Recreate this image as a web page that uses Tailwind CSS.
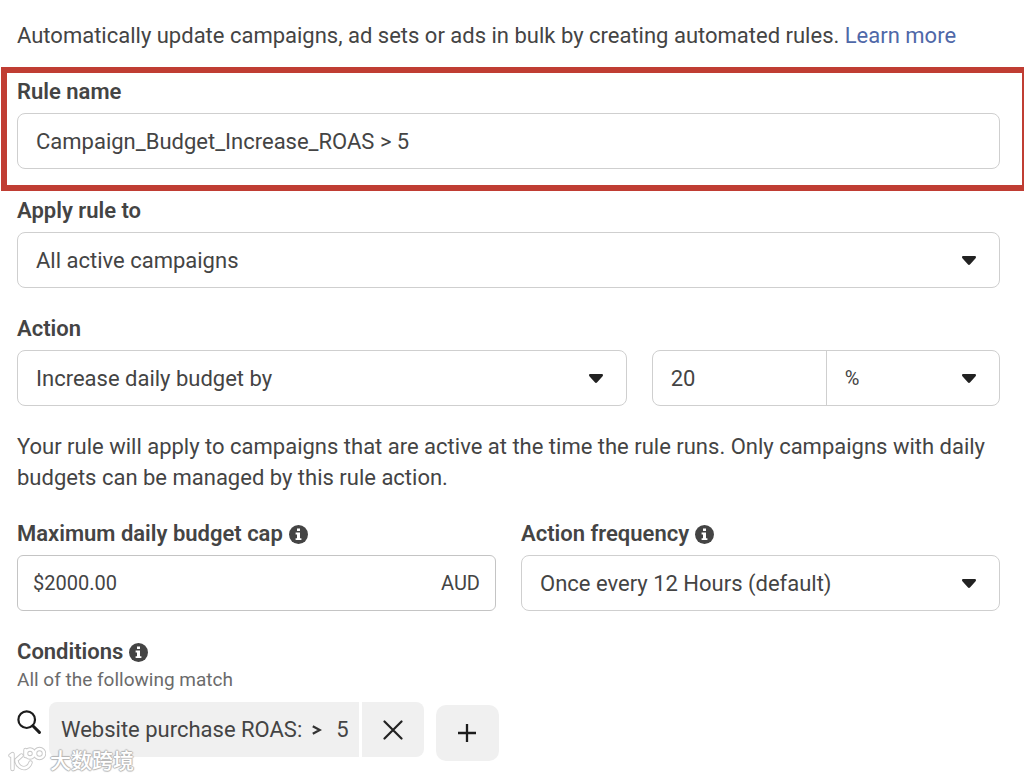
<!DOCTYPE html>
<html lang="en">
<head>
    <meta charset="UTF-8" />
    <meta name="viewport" content="width=device-width, initial-scale=1.0" />
    <title>Create Rule</title>
    <script src="https://cdn.jsdelivr.net/npm/@tailwindcss/browser@4"></script>
</head>

<body class="bg-white text-[#444444] font-[Roboto,sans-serif] text-[22px] overflow-x-hidden">

    <main class="pl-[17px] pr-6 pt-5">
        <p class="leading-[31px]">
            Automatically update campaigns, ad sets or ads in bulk by creating automated rules.
            <a href="#" class="text-[#4f68a8]">Learn more</a>
        </p>

        <form>
            <!-- Rule name, highlighted -->
            <div class="mt-4 -ml-4 -mr-7 border-6 border-[#c03d33] pt-1 pb-4 pl-[10px] pr-[22px]">
                <label for="ruleName" class="block leading-[30px] font-semibold">Rule name</label>
                <input type="text" id="ruleName" value="Campaign_Budget_Increase_ROAS &gt; 5"
                    class="mt-1.5 block h-14 w-full rounded-lg border border-[#cfcfcf] px-[18px]">
            </div>

            <div class="mt-[5px]">
                <label for="applyTo" class="block leading-[30px] font-semibold">Apply rule to</label>
                <div class="relative mt-1.5">
                    <select id="applyTo" class="block h-14 w-full appearance-none rounded-lg border border-[#cfcfcf] bg-white pl-[18px] pr-12">
                        <option>All active campaigns</option>
                    </select>
                    <svg class="pointer-events-none absolute right-6 top-6 h-[9px] w-[14px]" viewBox="0 0 14 9" fill="#222222"><path d="M1.3 0h11.4c1.2 0 1.7 1.3.9 2.2L8.2 8.3c-.7.8-1.7.8-2.4 0L.4 2.2C-.4 1.3.1 0 1.3 0z" /></svg>
                </div>
            </div>

            <div class="mt-[26px]">
                <label for="action" class="block leading-[30px] font-semibold">Action</label>
                <div class="mt-1.5 grid grid-cols-[7fr_4fr] gap-[25px]">
                    <div class="relative">
                        <select id="action" class="block h-14 w-full appearance-none rounded-lg border border-[#cfcfcf] bg-white pl-[18px] pr-12">
                            <option>Increase daily budget by</option>
                        </select>
                        <svg class="pointer-events-none absolute right-6 top-6 h-[9px] w-[14px]" viewBox="0 0 14 9" fill="#222222"><path d="M1.3 0h11.4c1.2 0 1.7 1.3.9 2.2L8.2 8.3c-.7.8-1.7.8-2.4 0L.4 2.2C-.4 1.3.1 0 1.3 0z" /></svg>
                    </div>
                    <div class="grid h-14 grid-cols-2 rounded-lg border border-[#cfcfcf]">
                        <input type="text" aria-label="Budget increase" value="20" class="w-full min-w-0 px-[18px]">
                        <div class="relative border-l border-[#cfcfcf]">
                            <select aria-label="Unit" class="h-full w-full appearance-none bg-transparent pl-[18px] pr-12 text-xl">
                                <option>%</option>
                            </select>
                            <svg class="pointer-events-none absolute right-[23px] top-[23px] h-[9px] w-[14px]" viewBox="0 0 14 9" fill="#222222"><path d="M1.3 0h11.4c1.2 0 1.7 1.3.9 2.2L8.2 8.3c-.7.8-1.7.8-2.4 0L.4 2.2C-.4 1.3.1 0 1.3 0z" /></svg>
                        </div>
                    </div>
                </div>
            </div>

            <p class="mt-[25px] leading-[31px]">
                Your rule will apply to campaigns that are active at the time the rule runs. Only campaigns with daily budgets can be managed by this rule action.
            </p>

            <div class="mt-[26px] grid grid-cols-2 gap-[25px]">
                <div>
                    <div class="flex items-center gap-1.5">
                        <label for="budgetCap" class="leading-[30px] font-semibold">Maximum daily budget cap</label>
                        <svg class="size-[19px]" viewBox="0 0 19 19"><circle cx="9.5" cy="9.5" r="9.5" fill="#444444" /><path d="M8 3.4h3v2.7H8zM6.6 7.5H11v5.7h1.4v1.9H6.6v-1.9H8V9.4H6.6z" fill="#fff" /></svg>
                    </div>
                    <div class="mt-1.5 flex h-14 items-center rounded-md border border-[#c4c4c4] px-[15px] text-xl">
                        <input type="text" id="budgetCap" value="$2000.00" class="min-w-0 flex-1">
                        <span>AUD</span>
                    </div>
                </div>
                <div>
                    <div class="flex items-center gap-1.5">
                        <label for="frequency" class="leading-[30px] font-semibold">Action frequency</label>
                        <svg class="size-[19px]" viewBox="0 0 19 19"><circle cx="9.5" cy="9.5" r="9.5" fill="#444444" /><path d="M8 3.4h3v2.7H8zM6.6 7.5H11v5.7h1.4v1.9H6.6v-1.9H8V9.4H6.6z" fill="#fff" /></svg>
                    </div>
                    <div class="relative mt-1.5">
                        <select id="frequency" class="block h-14 w-full appearance-none rounded-lg border border-[#cfcfcf] bg-white pl-[18px] pr-12">
                            <option>Once every 12 Hours (default)</option>
                        </select>
                        <svg class="pointer-events-none absolute right-6 top-6 h-[9px] w-[14px]" viewBox="0 0 14 9" fill="#222222"><path d="M1.3 0h11.4c1.2 0 1.7 1.3.9 2.2L8.2 8.3c-.7.8-1.7.8-2.4 0L.4 2.2C-.4 1.3.1 0 1.3 0z" /></svg>
                    </div>
                </div>
            </div>

            <div class="mt-[26px]">
                <div class="flex items-center gap-1.5">
                    <h2 class="leading-[30px] font-semibold">Conditions</h2>
                    <svg class="size-[19px]" viewBox="0 0 19 19"><circle cx="9.5" cy="9.5" r="9.5" fill="#444444" /><path d="M8 3.4h3v2.7H8zM6.6 7.5H11v5.7h1.4v1.9H6.6v-1.9H8V9.4H6.6z" fill="#fff" /></svg>
                </div>
                <p class="text-[19px] leading-[26px] text-[#6b6b6b]">All of the following match</p>

                <div class="mt-[9px] flex items-start">
                    <svg class="mt-2 mr-2 size-6" viewBox="0 0 24 24" fill="none" stroke="#1c1c1c"><circle cx="9.7" cy="9.7" r="8.3" stroke-width="2.2" /><path d="M15.8 15.8l6.600 6.600" stroke-width="3" stroke-linecap="round" /></svg>
                    <div class="flex gap-[3px]">
                        <button type="button" class="flex h-[55px] items-center rounded-l-lg bg-[#f0f0f0] pl-3 pr-2.5">
                            Website purchase ROAS:
                            <svg class="ml-2.5 mr-3.5 h-[10px] w-[10px]" viewBox="0 0 10 10" fill="none" stroke="#333333" stroke-width="2.3"><path d="M.8 1.200l7 3.800-7 3.800" /></svg>
                            5
                        </button>
                        <button type="button" aria-label="Remove condition" class="flex h-[55px] w-[62px] items-center justify-center rounded-r-lg bg-[#f0f0f0]">
                            <svg class="size-5" viewBox="0 0 20 20" fill="none" stroke="#222222" stroke-width="2.2" stroke-linecap="round"><path d="M1.5 1.5l17 17M18.5 1.5l-17 17" /></svg>
                        </button>
                    </div>
                    <button type="button" aria-label="Add condition" class="mt-[3px] ml-3 flex h-14 w-[63px] items-center justify-center rounded-[10px] bg-[#f0f0f0]">
                        <svg class="size-[18px]" viewBox="0 0 18 18" fill="none" stroke="#1c1c1c" stroke-width="2.3"><path d="M9 0v18M0 9h18" /></svg>
                    </button>
                </div>
            </div>
        </form>
    </main>

    <!-- Watermark -->
    <div class="pointer-events-none absolute left-2 top-[743px] flex items-center gap-1">
        <svg class="h-[28px] w-[38px]" viewBox="0 0 38 28" fill="none" stroke-linecap="round" stroke-linejoin="round">
            <g stroke="#c8c8c8" stroke-width="4.4">
                <path d="M2.5 10.500l2-1.500v15M13.500 10.500L8.500 15c0 6 6 9.500 10 7.500 2.500-1.200 3.500-3 4-5" />
                <path d="M17.500 5v6" /><circle cx="22" cy="8.500" r="4" /><circle cx="31.500" cy="8.500" r="4.500" />
            </g>
            <g stroke="#ffffff" stroke-width="2.6">
                <path d="M2.5 10.500l2-1.500v15M13.500 10.500L8.500 15c0 6 6 9.500 10 7.500 2.500-1.200 3.500-3 4-5" />
                <path d="M17.500 5v6" /><circle cx="22" cy="8.500" r="4" /><circle cx="31.500" cy="8.500" r="4.500" />
            </g>
        </svg>
        <span lang="zh-CN" class="font-['Noto_Sans_CJK_SC',sans-serif] text-[21px] leading-8 font-medium text-white [text-shadow:1px_0_1px_#b4b4b4,-1px_0_1px_#b4b4b4,0_1px_1px_#b4b4b4,0_-1px_1px_#b4b4b4]">大数跨境</span>
    </div>
</body>
</html>
